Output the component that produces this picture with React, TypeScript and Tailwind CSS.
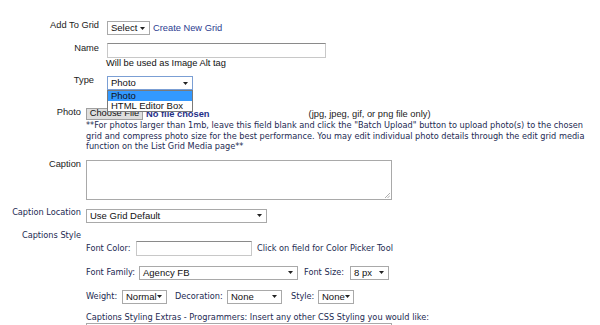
import React from "react";

const arial = "font-['Liberation_Sans',Arial,sans-serif]";
const verd = "font-['DejaVu_Sans',Verdana,sans-serif]";

function Arrow() {
  return (
    <svg width="5" height="3" viewBox="0 0 5 3" className="shrink-0">
      <path d="M0 0h5L2.5 3z" fill="#222" />
    </svg>
  );
}

function Sel({ text, cls, border = "border-[#a9a9a9]" }: { text: string; cls: string; border?: string }) {
  return (
    <div
      className={`flex h-[14px] shrink-0 items-center justify-between border ${border} bg-white pl-[3px] pr-[4px] font-['Liberation_Sans',Arial,sans-serif] text-[9.5px] leading-none text-[#111] ${cls}`}
    >
      <span>{text}</span>
      <Arrow />
    </div>
  );
}

export default function App() {
  const lbl = `${arial} text-[9.3px] leading-[11px] text-[#222]`;
  const vlbl = `${verd} text-[8.2px] leading-[11px] text-[#1c2a52]`;
  return (
    <div className="relative h-[325px] w-[600px] overflow-hidden bg-white">
      <div className="pt-[21px]">
        {/* Add to grid */}
        <div className="flex items-start">
          <div className={`w-[99px] -mt-px text-right ${lbl}`}>Add To Grid</div>
          <Sel text="Select" cls="ml-[8px] w-[43px]" />
          <a className={`ml-[3px] ${arial} text-[9.3px] leading-[14px] text-[#2c3c90]`}>Create New Grid</a>
        </div>
        {/* Name */}
        <div className="mt-[8px] flex items-start">
          <div className={`w-[99px] text-right ${lbl}`}>Name</div>
          <div className="ml-[8px] h-[15px] w-[219px] border border-[#c8c8c8] border-t-[#8a8a8a] bg-white" />
        </div>
        <div className={`pl-[106px] ${arial} text-[9.3px] leading-[11px] text-[#111]`}>Will be used as Image Alt tag</div>
        {/* Type */}
        <div className="mt-[7px] flex items-start">
          <div className={`w-[99px] -mt-px pr-[5px] text-right ${lbl}`}>Type</div>
          <Sel text="Photo" cls="ml-[8px] w-[86px]" border="border-[#7b9fd4]" />
        </div>

        {/* Photo */}
        <div className="mt-[18px] flex items-start">
          <div className={`w-[81px] -mt-px text-right ${lbl}`}>Photo</div>
          <div className="ml-[5px] flex items-start">
            <div className={`flex h-[12px] w-[57px] items-center justify-center border border-[#a0a0a0] bg-[#dedede] ${arial} text-[9.3px] leading-none text-[#111]`}>
              Choose File
            </div>
            <span className={`ml-[3px] ${arial} text-[9.3px] font-bold leading-[12px] text-[#1f2f88]`}>No file chosen</span>
            <span className={`ml-[99px] ${arial} text-[9.3px] leading-[12px] text-[#222]`}>(jpg, jpeg, gif, or png file only)</span>
          </div>
        </div>
        <div className={`pl-[86px] ${verd} text-[8.2px] leading-[10.5px] text-[#1c2a52] whitespace-nowrap`}>
          <div>**For photos larger than 1mb, leave this field blank and click the "Batch Upload" button to upload photo(s) to the chosen</div>
          <div>grid and compress photo size for the best performance. You may edit individual photo details through the edit grid media</div>
          <div>function on the List Grid Media page**</div>
        </div>

        {/* Caption */}
        <div className="mt-[8px] flex items-start">
          <div className={`w-[81px] -mt-px text-right ${lbl}`}>Caption</div>
          <div className="relative ml-[5px] h-[40px] w-[306px] border border-[#a9a9a9] bg-white">
            <svg width="5" height="5" viewBox="0 0 5 5" className="absolute bottom-[1px] right-[1px]">
              <path d="M5 0L0 5M5 2.5L2.5 5" stroke="#999" strokeWidth="0.8" />
            </svg>
          </div>
        </div>

        {/* Caption Location */}
        <div className="mt-[9px] flex items-start">
          <div className={`w-[81px] -mt-[2px] text-right ${vlbl}`}>Caption Location</div>
          <Sel text="Use Grid Default" cls="ml-[5px] w-[181px]" />
        </div>

        {/* Captions Style */}
        <div className={`mt-[7px] w-[81px] text-right ${vlbl}`}>Captions Style</div>
        <div className="pl-[86px]">
          <div className="flex items-center">
            <span className={`w-[45px] ${vlbl}`}>Font Color:</span>
            <div className="ml-[5px] h-[15px] w-[116px] border border-[#c8c8c8] border-t-[#8a8a8a] bg-white" />
            <span className={`ml-[5px] ${vlbl}`}>Click on field for Color Picker Tool</span>
          </div>
          <div className="mt-[10px] flex items-center">
            <span className={`w-[50px] ${vlbl}`}>Font Family:</span>
            <Sel text="Agency FB" cls="ml-[3px] w-[159px]" />
            <span className={`ml-[6px] w-[42px] whitespace-nowrap ${vlbl}`}>Font Size:</span>
            <Sel text="8 px" cls="ml-[4px] w-[39px]" />
          </div>
          <div className="mt-[10px] flex items-center">
            <span className={`w-[31px] ${vlbl}`}>Weight:</span>
            <Sel text="Normal" cls="ml-[5px] w-[45px]" />
            <span className={`ml-[8px] w-[47px] whitespace-nowrap ${vlbl}`}>Decoration:</span>
            <Sel text="None" cls="ml-[5px] w-[55px]" />
            <span className={`ml-[9px] w-[24px] ${vlbl}`}>Style:</span>
            <Sel text="None" cls="ml-[3px] w-[36px]" />
          </div>
          <div className={`mt-[8px] ${vlbl} whitespace-nowrap`}>
            Captions Styling Extras - Programmers: Insert any other CSS Styling you would like:
          </div>
          <div className="h-[40px] w-[306px] border border-[#a9a9a9] bg-white" />
        </div>
      </div>

      {/* open dropdown */}
      <div className={`absolute left-[107px] top-[90px] w-[86px] border border-[#7a7a7a] bg-white ${arial} text-[9.5px] leading-[10px] text-[#111]`}>
        <div className="bg-[#3399ff] pl-[3px]">Photo</div>
        <div className="pl-[3px]">HTML Editor Box</div>
      </div>
    </div>
  );
}
